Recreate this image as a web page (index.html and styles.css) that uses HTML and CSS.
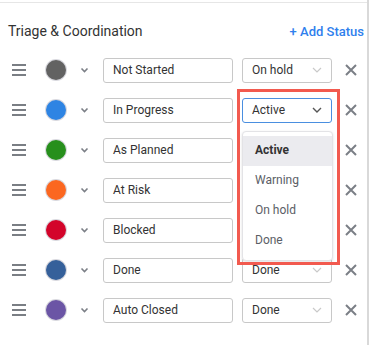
FILE: index.html
```html
<!DOCTYPE html>
<html lang="en">
<head>
    <meta charset="UTF-8">
    <title>Statuses</title>
    <link rel="stylesheet" href="styles.css">
</head>
<body>

<div class="panel">
    <div class="head">
        <h2 class="title">Triage &amp; Coordination</h2>
        <a class="add" href="#">+ Add Status</a>
    </div>

    <ul class="rows">
        <li class="row">
            <span class="grip"><i></i><i></i><i></i></span>
            <span class="dot" style="background:#626262"></span>
            <span class="caret"><svg width="9" height="6" viewBox="0 0 9 6"><path d="M1.5 1.5 L4.5 4.5 L7.5 1.5" fill="none" stroke="#7b7f86" stroke-width="1.6"/></svg></span>
            <div class="name">Not Started</div>
            <div class="sel">On hold<svg class="arr" width="10" height="6" viewBox="0 0 10 6"><path d="M1 1 L5 5 L9 1" fill="none" stroke="#c9c9c9" stroke-width="1.2"/></svg></div>
            <span class="del"><svg width="12" height="12" viewBox="0 0 12 12"><path d="M1 1 L11 11 M11 1 L1 11" stroke="#7b7f86" stroke-width="2"/></svg></span>
        </li>
        <li class="row">
            <span class="grip"><i></i><i></i><i></i></span>
            <span class="dot" style="background:#2e84e3"></span>
            <span class="caret"><svg width="9" height="6" viewBox="0 0 9 6"><path d="M1.5 1.5 L4.5 4.5 L7.5 1.5" fill="none" stroke="#7b7f86" stroke-width="1.6"/></svg></span>
            <div class="name">In Progress</div>
            <div class="cell">
                <div class="sel open">Active<svg class="arr" width="10" height="6" viewBox="0 0 10 6"><path d="M1 1 L5 5 L9 1" fill="none" stroke="#555" stroke-width="1.4"/></svg></div>
                <ul class="menu">
                    <li class="current">Active</li>
                    <li>Warning</li>
                    <li>On hold</li>
                    <li>Done</li>
                </ul>
                <div class="mark"></div>
            </div>
            <span class="del"><svg width="12" height="12" viewBox="0 0 12 12"><path d="M1 1 L11 11 M11 1 L1 11" stroke="#7b7f86" stroke-width="2"/></svg></span>
        </li>
        <li class="row">
            <span class="grip"><i></i><i></i><i></i></span>
            <span class="dot" style="background:#278f1c"></span>
            <span class="caret"><svg width="9" height="6" viewBox="0 0 9 6"><path d="M1.5 1.5 L4.5 4.5 L7.5 1.5" fill="none" stroke="#7b7f86" stroke-width="1.6"/></svg></span>
            <div class="name">As Planned</div>
            <div class="sel"></div>
            <span class="del"><svg width="12" height="12" viewBox="0 0 12 12"><path d="M1 1 L11 11 M11 1 L1 11" stroke="#7b7f86" stroke-width="2"/></svg></span>
        </li>
        <li class="row">
            <span class="grip"><i></i><i></i><i></i></span>
            <span class="dot" style="background:#fb6720"></span>
            <span class="caret"><svg width="9" height="6" viewBox="0 0 9 6"><path d="M1.5 1.5 L4.5 4.5 L7.5 1.5" fill="none" stroke="#7b7f86" stroke-width="1.6"/></svg></span>
            <div class="name">At Risk</div>
            <div class="sel"></div>
            <span class="del"><svg width="12" height="12" viewBox="0 0 12 12"><path d="M1 1 L11 11 M11 1 L1 11" stroke="#7b7f86" stroke-width="2"/></svg></span>
        </li>
        <li class="row">
            <span class="grip"><i></i><i></i><i></i></span>
            <span class="dot" style="background:#d3042a"></span>
            <span class="caret"><svg width="9" height="6" viewBox="0 0 9 6"><path d="M1.5 1.5 L4.5 4.5 L7.5 1.5" fill="none" stroke="#7b7f86" stroke-width="1.6"/></svg></span>
            <div class="name">Blocked</div>
            <div class="sel"></div>
            <span class="del"><svg width="12" height="12" viewBox="0 0 12 12"><path d="M1 1 L11 11 M11 1 L1 11" stroke="#7b7f86" stroke-width="2"/></svg></span>
        </li>
        <li class="row">
            <span class="grip"><i></i><i></i><i></i></span>
            <span class="dot" style="background:#35609a"></span>
            <span class="caret"><svg width="9" height="6" viewBox="0 0 9 6"><path d="M1.5 1.5 L4.5 4.5 L7.5 1.5" fill="none" stroke="#7b7f86" stroke-width="1.6"/></svg></span>
            <div class="name">Done</div>
            <div class="sel">Done<svg class="arr" width="10" height="6" viewBox="0 0 10 6"><path d="M1 1 L5 5 L9 1" fill="none" stroke="#c9c9c9" stroke-width="1.2"/></svg></div>
            <span class="del"><svg width="12" height="12" viewBox="0 0 12 12"><path d="M1 1 L11 11 M11 1 L1 11" stroke="#7b7f86" stroke-width="2"/></svg></span>
        </li>
        <li class="row">
            <span class="grip"><i></i><i></i><i></i></span>
            <span class="dot" style="background:#6b55a5"></span>
            <span class="caret"><svg width="9" height="6" viewBox="0 0 9 6"><path d="M1.5 1.5 L4.5 4.5 L7.5 1.5" fill="none" stroke="#7b7f86" stroke-width="1.6"/></svg></span>
            <div class="name">Auto Closed</div>
            <div class="sel">Done<svg class="arr" width="10" height="6" viewBox="0 0 10 6"><path d="M1 1 L5 5 L9 1" fill="none" stroke="#c9c9c9" stroke-width="1.2"/></svg></div>
            <span class="del"><svg width="12" height="12" viewBox="0 0 12 12"><path d="M1 1 L11 11 M11 1 L1 11" stroke="#7b7f86" stroke-width="2"/></svg></span>
        </li>
    </ul>
</div>

</body>
</html>
```

FILE: styles.css
```css
* {
    margin: 0;
    padding: 0;
    box-sizing: border-box;
}

ul {
    list-style: none
}

body {
    background: #fff;
    font-family: Roboto, "Liberation Sans", sans-serif;
    color: #333;
}

.panel {
    width: 369px;
    height: 345px;
    border-right: 2px solid #d9d9d9;
    padding-top: 2px;
}

.head {
    display: flex;
    align-items: center;
    justify-content: space-between;
    border-top: 1px solid #e6e6e6;
    height: 48px;
    padding: 9px 3px 0 8px;
}

.title {
    font-size: 14px;
    font-weight: 400;
    color: #333;
}

.add {
    font-size: 13px;
    font-weight: 500;
    color: #2f80ed;
    text-decoration: none;
}

.row {
    display: flex;
    align-items: center;
    height: 40px;
    padding-left: 12px;
}

.grip {
    width: 14px;
    display: flex;
    flex-direction: column;
    gap: 3px;
}

.grip i {
    display: block;
    height: 2px;
    background: #7a7e84;
}

.dot {
    width: 20px;
    height: 20px;
    border-radius: 50%;
    margin-left: 20px;
    box-shadow: 0 0 0 1px #d8d8de;
}

.caret {
    display: flex;
    margin-left: 14px;
    width: 9px;
}

.name {
    margin-left: 14px;
    width: 130px;
    height: 25px;
    border: 1px solid #c8c8c8;
    border-radius: 3px;
    padding-left: 9px;
    font-size: 12px;
    line-height: 23px;
    color: #333;
}

.cell {
    position: relative;
    margin-left: 9px;
}

.row > .sel {
    margin-left: 9px;
}

.sel {
    width: 90px;
    height: 25px;
    border: 1px solid #c8c8c8;
    border-radius: 3px;
    padding: 0 9px 0 9px;
    font-size: 12px;
    line-height: 23px;
    color: #333;
    display: flex;
    justify-content: space-between;
    align-items: center;
}

.sel.open {
    border-color: #4a8fe0;
}

.del {
    display: flex;
    margin-left: 13px;
}

.menu {
    position: absolute;
    left: 0;
    top: 33px;
    width: 91px;
    padding: 4px 0 4px;
    background: #fff;
    border: 1px solid #e3e3e6;
    border-radius: 4px;
    box-shadow: 0 1px 3px rgba(0, 0, 0, 0.12);
    z-index: 2;
}

.menu li {
    height: 30px;
    line-height: 29px;
    padding-left: 12px;
    font-size: 12px;
    color: #5b5e66;
}

.menu li.current {
    background: #ebebef;
    font-weight: 700;
    color: #333;
}

.mark {
    position: absolute;
    left: -5px;
    top: -9px;
    width: 103px;
    height: 176px;
    border: 3px solid #f25a4f;
    z-index: 3;
}
```
